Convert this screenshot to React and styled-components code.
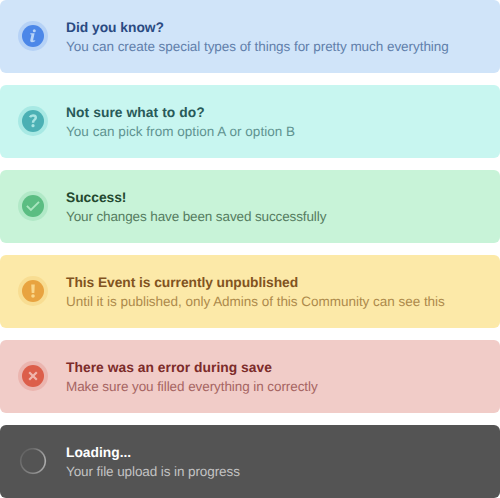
import React from 'react';
import styled, { createGlobalStyle } from 'styled-components';

const GlobalStyle = createGlobalStyle`
  body {
    margin: 0;
    background: #fff;
    font-family: "Liberation Sans", Arial, sans-serif;
    text-rendering: geometricPrecision;
    -webkit-font-smoothing: antialiased;
  }
`;

const Stack = styled.main`
  display: grid;
  gap: 12px;
  width: 500px;
`;

const Alert = styled.section`
  display: flex;
  align-items: flex-start;
  gap: 18px;
  box-sizing: border-box;
  height: 73px;
  padding: 18px 18px 0;
  border-radius: 6px;
  background: ${(p) => p.$bg};
`;

const Icon = styled.svg`
  width: 30px;
  height: 30px;
  margin-top: 3px;
  flex: none;
`;

const Spinner = styled.div`
  box-sizing: border-box;
  width: 28px;
  height: 28px;
  margin: 4px 1px;
  flex: none;
  border-radius: 50%;
  background: conic-gradient(#6c6c6c 0deg, #959595 45deg, #b0b0b0 90deg, #a2a2a2 135deg, #888 180deg, #707070 250deg, #636363 320deg, #6c6c6c 360deg);
  mask: radial-gradient(circle, transparent 11px, #000 12px, #000 12.5px, transparent 13.6px);
`;

const Copy = styled.div`
  display: grid;
`;

const Title = styled.div`
  justify-self: start;
  font-size: 13.8px;
  font-weight: 700;
  line-height: 19px;
  white-space: nowrap;
  letter-spacing: ${(p) => p.$track || 0}px;
  color: ${(p) => p.$color};
`;

const Message = styled(Title)`
  font-size: 13.5px;
  font-weight: 400;
`;

const Disc = styled.circle`
  fill: ${(p) => p.$color};
`;

const glyphs = {
  info: (c) => (
    <g fill={c}>
      <circle cx="16.3" cy="9.8" r="1.5" />
      <path d="M12.4 12.2h4.2l-1.4 6.6c-.1.7.1.9.6.8l1.5-.4-.2 1c-1.2.7-2.2 1-3.2 1-1.3 0-1.9-.8-1.6-2.1l1.2-5.5-1.4-.3z" />
    </g>
  ),
  question: (c) => (
    <g fill="none" stroke={c}>
      <path strokeWidth="2.5" d="M12 11.3c.5-1.2 1.5-1.8 3-1.8 1.7 0 2.8.8 2.8 2.2 0 2.1-2.7 2.2-2.7 4.3v.7" />
      <circle cx="15" cy="19.7" r="1.6" fill={c} stroke="none" />
    </g>
  ),
  check: (c) => <path d="M8.9 14.8l4 4.2 8.1-8.2" fill="none" stroke={c} strokeWidth="1.9" />,
  warning: (c) => (
    <g fill={c}>
      <path d="M13.2 8.6h3.6l-.5 8.4h-2.6z" />
      <circle cx="15" cy="20" r="1.8" />
    </g>
  ),
  cross: (c) => <path d="M11.2 11.2l7.6 7.6m0-7.6l-7.6 7.6" fill="none" stroke={c} strokeWidth="2.2" />,
};

const alerts = [
  { icon: 'info', bg: '#d0e4f9', title: 'Did you know?', titleTrack: -0.01, text: 'You can create special types of things for pretty much everything', textTrack: -0.05, tc: '#2a4a82', mc: '#617fab', halo: '#b6d2f6', dot: '#4c87e8', ink: '#b8d4f7' },
  { icon: 'question', bg: '#c8f6f0', title: 'Not sure what to do?', titleTrack: 0.08, text: 'You can pick from option A or option B', textTrack: 0.04, tc: '#285a59', mc: '#5f9390', halo: '#a8e9e4', dot: '#4bb0b4', ink: '#a8e4e2' },
  { icon: 'check', bg: '#c8f3d8', title: 'Success!', titleTrack: -0.02, text: 'Your changes have been saved successfully', textTrack: -0.12, tc: '#23482f', mc: '#557c60', halo: '#b1e9c7', dot: '#5bbd82', ink: '#a9e6bf' },
  { icon: 'warning', bg: '#fce9a8', title: 'This Event is currently unpublished', titleTrack: -0.05, text: 'Until it is published, only Admins of this Community can see this', textTrack: -0.025, tc: '#81531f', mc: '#ad8a4b', halo: '#f8dd92', dot: '#e8a340', ink: '#f9d78b' },
  { icon: 'cross', bg: '#f1ccc8', title: 'There was an error during save', titleTrack: 0.04, text: 'Make sure you filled everything in correctly', textTrack: -0.08, tc: '#7c2b2a', mc: '#a66462', halo: '#ebb5af', dot: '#dc5e4a', ink: '#f0b5ac' },
  { bg: '#545454', title: 'Loading...', titleTrack: 0, text: 'Your file upload is in progress', textTrack: -0.09, tc: '#fff', mc: '#c3c3c3' },
];

export default function App() {
  return (
    <>
      <GlobalStyle />
      <Stack>
        {alerts.map((a) => (
          <Alert key={a.title} $bg={a.bg}>
            {a.icon ? (
              <Icon viewBox="0 0 30 30">
                <Disc cx="15" cy="15" r="15" $color={a.halo} />
                <Disc cx="15" cy="15" r="11" $color={a.dot} />
                {glyphs[a.icon](a.ink)}
              </Icon>
            ) : (
              <Spinner />
            )}
            <Copy>
              <Title $color={a.tc} $track={a.titleTrack}>{a.title}</Title>
              <Message $color={a.mc} $track={a.textTrack}>{a.text}</Message>
            </Copy>
          </Alert>
        ))}
      </Stack>
    </>
  );
}
